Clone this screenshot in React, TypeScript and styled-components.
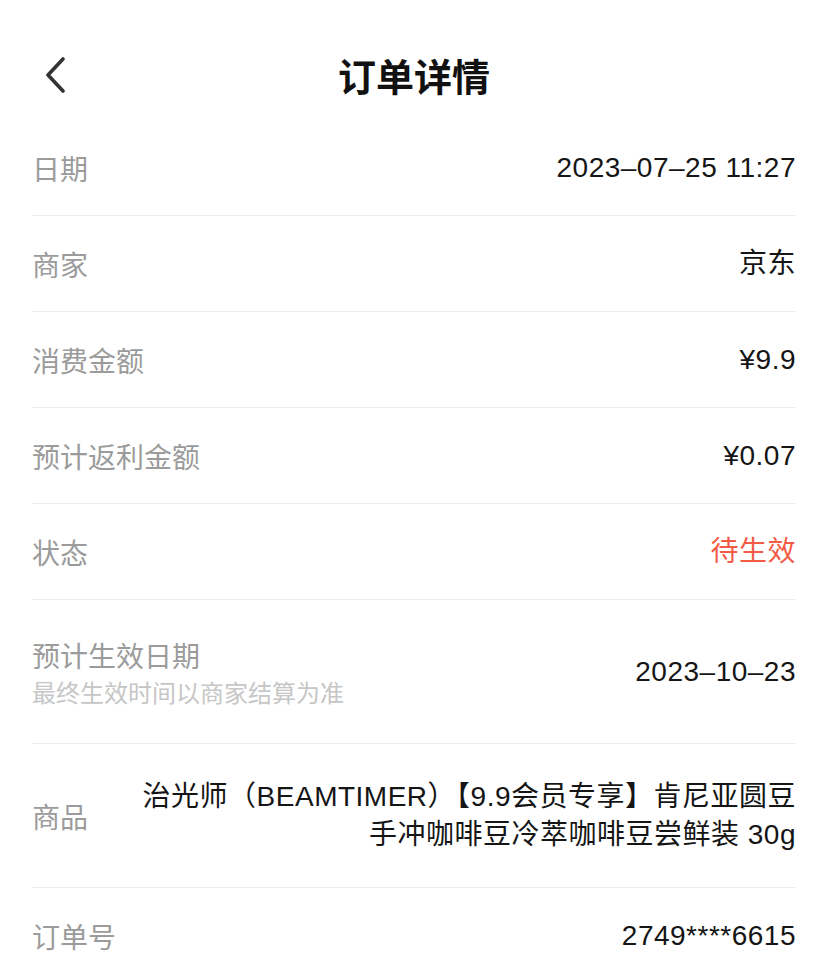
import React from 'react';
import styled, { createGlobalStyle } from 'styled-components';

const GlobalStyle = createGlobalStyle`
  html, body {
    margin: 0;
    padding: 0;
    background: #ffffff;
  }
  body {
    font-family: "Liberation Sans", "Noto Sans CJK SC", sans-serif;
    -webkit-font-smoothing: antialiased;
  }
`;

const Page = styled.div`
  width: 828px;
  min-height: 980px;
  background: #ffffff;
  box-sizing: border-box;
`;

const Header = styled.header`
  height: 120px;
  display: grid;
  grid-template-columns: 100px 1fr 100px;
  align-items: center;
  padding-top: 30px;
  box-sizing: border-box;
`;

const BackButton = styled.button`
  display: flex;
  align-items: center;
  justify-content: flex-start;
  height: 40px;
  padding: 0 0 0 45px;
  border: none;
  background: transparent;
  cursor: pointer;
`;

const Title = styled.h1`
  margin: 0;
  text-align: center;
  font-size: 38px;
  line-height: 48px;
  font-weight: 700;
  color: #111111;
  font-family: "Noto Sans CJK SC", sans-serif;
`;

const List = styled.div`
  padding: 0 32px;
`;

const Row = styled.div<{ $tall?: boolean; $last?: boolean }>`
  display: flex;
  align-items: center;
  justify-content: space-between;
  gap: 24px;
  height: ${p => (p.$tall ? 143 : 95)}px;
  border-bottom: ${p => (p.$last ? 'none' : '1px solid #ececec')};
`;

const LabelBox = styled.div`
  display: flex;
  flex-direction: column;
  gap: 4px;
  flex-shrink: 0;
`;

const Label = styled.span`
  font-size: 28px;
  color: #9b9b9b;
  line-height: 36px;
  font-family: "Noto Sans CJK SC", sans-serif;
`;

const Hint = styled.span`
  font-size: 24px;
  color: #c6c6c6;
  line-height: 30px;
  font-family: "Noto Sans CJK SC", sans-serif;
`;

const Value = styled.div<{ $color?: string }>`
  font-size: 28px;
  line-height: 38px;
  letter-spacing: 0.5px;
  color: ${p => p.$color || '#151515'};
  text-align: right;
  font-family: "Liberation Sans", "Noto Sans CJK SC", sans-serif;
`;

const ValueLine = styled.span`
  display: block;
  white-space: nowrap;
`;

const ChevronLeft = () => (
  <svg width="24" height="36" viewBox="0 0 24 36" fill="none">
    <path d="M18 2 L3 18 L18 34" stroke="#333333" strokeWidth="3.6" strokeLinecap="round" strokeLinejoin="round" />
  </svg>
);

type Item = {
  label: string;
  hint?: string;
  value: string | string[];
  color?: string;
};

const items: Item[] = [
  { label: '日期', value: '2023–07–25 11:27' },
  { label: '商家', value: '京东' },
  { label: '消费金额', value: '¥9.9' },
  { label: '预计返利金额', value: '¥0.07' },
  { label: '状态', value: '待生效', color: '#f35b46' },
  { label: '预计生效日期', hint: '最终生效时间以商家结算为准', value: '2023–10–23' },
  {
    label: '商品',
    value: ['治光师（BEAMTIMER）【9.9会员专享】肯尼亚圆豆', '手冲咖啡豆冷萃咖啡豆尝鲜装 30g'],
  },
  { label: '订单号', value: '2749****6615' },
];

export default function App() {
  return (
    <Page>
      <GlobalStyle />
      <Header>
        <BackButton aria-label="返回">
          <ChevronLeft />
        </BackButton>
        <Title>订单详情</Title>
        <div />
      </Header>
      <List>
        {items.map((item, i) => {
          const tall = !!item.hint || Array.isArray(item.value);
          return (
            <Row key={item.label} $tall={tall} $last={i === items.length - 1}>
              <LabelBox>
                <Label>{item.label}</Label>
                {item.hint && <Hint>{item.hint}</Hint>}
              </LabelBox>
              <Value $color={item.color}>
                {Array.isArray(item.value)
                  ? item.value.map(line => <ValueLine key={line}>{line}</ValueLine>)
                  : item.value}
              </Value>
            </Row>
          );
        })}
      </List>
    </Page>
  );
}
